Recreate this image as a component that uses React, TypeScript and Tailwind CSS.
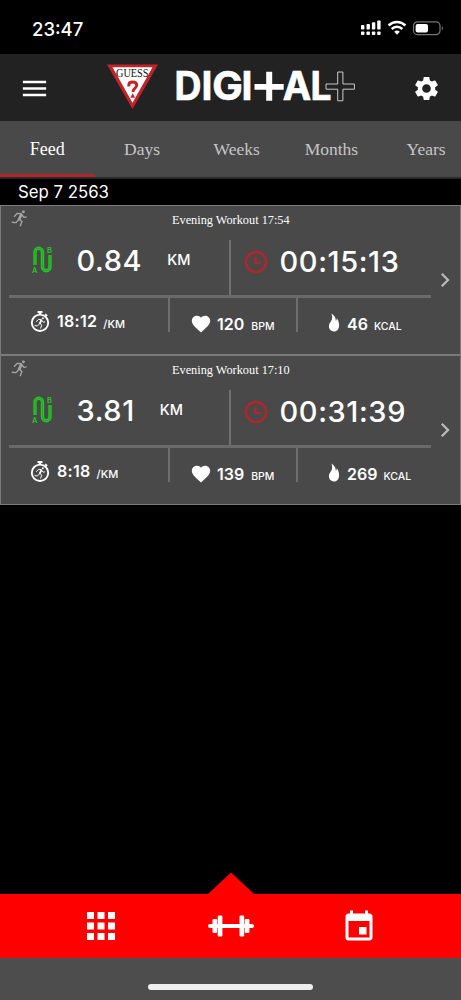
import { MdApps, MdEvent, MdFavorite, MdMenu, MdSettings } from 'react-icons/md';

interface Workout {
  id: number;
  title: string;
  distance: string;
  duration: string;
  pace: string;
  bpm: string;
  kcal: string;
}

const tabs = ['Feed', 'Days', 'Weeks', 'Months', 'Years'];

const workouts: Workout[] = [
  { id: 1, title: 'Evening Workout 17:54', distance: '0.84', duration: '00:15:13', pace: '18:12', bpm: '120', kcal: '46' },
  { id: 2, title: 'Evening Workout 17:10', distance: '3.81', duration: '00:31:39', pace: '8:18', bpm: '139', kcal: '269' },
];

function StatusBar() {
  return (
    <div className="flex h-[54px] shrink-0 items-start justify-between pl-8 pr-[17px]">
      <span className="mt-[18px] text-[18.500px] font-medium leading-[22px]">23:47</span>
      <svg className="mt-5" width="84" height="16" viewBox="0 0 84 16" fill="none">
        <g fill="#fff">
          <rect x="1" y="5" width="3.4" height="4.5" rx="0.8" />
          <rect x="6.5" y="4" width="3.4" height="5.5" rx="0.8" />
          <rect x="11.9" y="2.3" width="3.4" height="7.2" rx="0.8" />
          <rect x="17.2" y="0.5" width="3.4" height="9" rx="0.8" />
          <rect x="1" y="11.5" width="3.4" height="3.5" rx="0.8" />
          <rect x="6.5" y="11.5" width="3.4" height="3.5" rx="0.8" />
          <rect x="11.9" y="11.5" width="3.4" height="3.5" rx="0.8" />
          <rect x="17.2" y="11.5" width="3.4" height="3.5" rx="0.8" />
          <path d="M34.2 11.8a4 4 0 0 1 5.6 0L37 14.8z" />
        </g>
        <path d="M28.6 5.5a12 12 0 0 1 16.8 0M31.7 9a7.6 7.6 0 0 1 10.6 0" stroke="#fff" strokeWidth="2.5" />
        <rect x="53.5" y="1.8" width="26.5" height="12.9" rx="4" stroke="#747474" strokeWidth="1.2" />
        <rect x="55.6" y="4" width="12.4" height="8.6" rx="2" fill="#fff" />
        <path d="M81.8 6v4.5c1.6-.8 1.6-3.7 0-4.500z" fill="#747474" />
      </svg>
    </div>
  );
}

function GuessLogo() {
  return (
    <svg width="52" height="46" viewBox="0 0 52 46">
      <path d="M0 0.500H51L25.500 45z" fill="#c3222b" />
      <path d="M5.500 3.200H45.500L25.500 38.800z" fill="#fff" />
      <text x="9" y="12.800" textLength="32.500" lengthAdjust="spacingAndGlyphs" fontSize="12.500" fill="#111" className="font-['Liberation_Serif',serif]">
        GUESS
      </text>
      <path d="M21.800 22.500v-1.500c0-2.200 1.600-3 3.900-3 2.500 0 4 1.100 4 3.200 0 3.300-3.700 2.700-3.700 6.800" fill="none" stroke="#c3222b" strokeWidth="2.900" />
      <path d="M25.700 29.300l2.400 4.500h-4.800z" fill="#c3222b" />
    </svg>
  );
}

function DigitalLogo() {
  return (
    <svg width="182" height="52" viewBox="0 -10 182 52">
      <g fill="#fff" stroke="#fff" strokeWidth="0.700" fontSize="39" fontWeight="700" className="font-[Inter,sans-serif]">
        <text x="-0.500" y="30.300" textLength="27" lengthAdjust="spacingAndGlyphs">D</text>
        <text x="26.500" y="30.300">I</text>
        <text x="37.200" y="30.300" textLength="30.500" lengthAdjust="spacingAndGlyphs">G</text>
        <text x="66.500" y="30.300">I</text>
        <text x="107.800" y="30.300" textLength="28.500" lengthAdjust="spacingAndGlyphs">A</text>
        <text x="135.500" y="30.300" textLength="21" lengthAdjust="spacingAndGlyphs">L</text>
      </g>
      <path d="M91.200 1.700h6v12.200h11.500v5.800H97.200v11h-6v-11H79.500v-5.800h11.700z" fill="#fff" />
      <path d="M162.700 2h5.200v12h11.500v5.200h-11.500v11.600h-5.200V19.200h-11.700V14h11.700z" fill="none" stroke="#ddd" strokeWidth="0.900" />
    </svg>
  );
}

function Header() {
  return (
    <header className="flex h-[67px] shrink-0 items-center bg-[#222222] pb-[3px]">
      <MdMenu className="ml-[19px] mt-1 h-[31px] w-[31px]" />
      <div className="ml-[57px] mt-[2px]">
        <GuessLogo />
      </div>
      <div className="ml-4">
        <DigitalLogo />
      </div>
      <MdSettings className="ml-[55px] mt-[5px] h-[29px] w-[29px]" />
    </header>
  );
}

function Tabs() {
  return (
    <nav className="flex h-[58px] shrink-0 overflow-hidden border-b-2 border-[#292929] bg-[#494949] font-['Liberation_Serif',serif]">
      {tabs.map((tab, i) => (
        <div
          key={tab}
          className={
            i === 0
              ? 'flex h-[56px] w-[94.700px] shrink-0 items-center justify-center border-b-[3px] border-[#b0262b] pt-[4px] text-[18px] text-white'
              : 'flex h-[57px] w-[94.700px] shrink-0 items-center justify-center text-[17.500px] text-[#c6c6c6]'
          }
        >
          {tab}
        </div>
      ))}
    </nav>
  );
}

function Runner() {
  return (
    <>
      <circle cx="35.500" cy="5.500" r="4.300" fill="currentColor" />
      <path d="M30 12L22 29" stroke="currentColor" strokeWidth="8" fill="none" />
      <path
        d="M31 11L17 10L8 20M31 14L37 21.500L45 20M23 26L31 34L26 48M22 28L14 37L1 36"
        stroke="currentColor"
        strokeWidth="4"
        strokeLinejoin="round"
        fill="none"
      />
    </>
  );
}

function RouteIcon() {
  return (
    <svg className="ml-[23px] mt-[6px] shrink-0" width="22" height="28" viewBox="0 0 22 28" fill="none">
      <path d="M3 19V6a3.700 3.700 0 0 1 7.500 0V21a3.700 3.700 0 0 0 7.500 0V9" stroke="#27c427" strokeWidth="3.400" />
      <path d="M3 19V6a3.700 3.700 0 0 1 7.500 0V21a3.700 3.700 0 0 0 7.500 0V9" stroke="#23981f" strokeWidth="0.600" />
      <g fill="#27c427" fontSize="7.500" fontWeight="600" className="font-[Inter,sans-serif]">
        <text x="0" y="27">A</text>
        <text x="15" y="6.700">B</text>
      </g>
    </svg>
  );
}

function ClockIcon() {
  return (
    <svg className="ml-[13px] mt-[10px] shrink-0" width="24" height="24" viewBox="0 0 24 24" fill="none" stroke="#b3252b">
      <circle cx="12" cy="12" r="10" strokeWidth="2.400" />
      <path d="M11.500 6.500v6.300h5.600" strokeWidth="2.300" />
    </svg>
  );
}

function PaceIcon() {
  return (
    <svg className="ml-[21px] mt-[12px] shrink-0" width="20" height="23" viewBox="0 0 20 23">
      <path d="M7.500 1h5v2h-1.300v1.500H8.800V3H7.500zM15.700 3.500l2 1.700-1.200 1.500-2-1.800z" fill="#fff" />
      <circle cx="10" cy="12.800" r="8.200" fill="none" stroke="#fff" strokeWidth="1.900" />
      <g transform="translate(4.300 7) scale(0.240)">
        <Runner />
      </g>
    </svg>
  );
}

function FlameIcon() {
  return (
    <svg className="ml-[30px] mt-[15px] shrink-0" width="12" height="19" viewBox="0 0 12 19" fill="#fff">
      <path d="M3.300.5c3.100 1.600 4.400 4.200 4.600 7.400.6-.8.900-1.700.8-2.700 1.700 2 2.500 4.600 2.400 7.300-.1 3.400-2 6-5 6S.9 16.400.9 13.300c0-2.300 1.200-3.600 2.200-5.200C4.400 6 4.600 3.300 3.300.5z" />
    </svg>
  );
}

function WorkoutCard({ workout }: { workout: Workout }) {
  return (
    <article className="flex h-[150px] border border-[#7b7b7b] bg-[#494949]">
      <div className="w-[430px] shrink-0 pl-2">
        <div className="flex h-[34px] items-start font-['Liberation_Serif',serif] text-[12.300px] leading-none">
          <svg className="ml-[2px] mt-[4px] h-[17px] w-[17px] text-[#a5a5a5]" viewBox="0 0 48 50">
            <Runner />
          </svg>
          <span className="ml-[144px] mt-[8px] whitespace-nowrap">{workout.title}</span>
        </div>

        <div className="flex h-[55px] items-start">
          <RouteIcon />
          <span className="ml-[22.500px] mt-[6px] text-[29px] font-medium leading-none tracking-[0.600px]">{workout.distance}</span>
          <span className="ml-[25px] mt-[13px] text-[14.500px] font-medium leading-none">KM</span>
          <div className="ml-auto flex h-full w-[202px] items-start border-l-2 border-[#707070]">
            <ClockIcon />
            <span className="ml-[11.500px] mt-[7px] whitespace-nowrap text-[29px] font-medium leading-none tracking-[0.600px]">{workout.duration}</span>
          </div>
        </div>

        <div className="h-[3px] bg-[#6a6a6a]" />

        <div className="flex h-[34px] text-[16px] font-semibold leading-none">
          <div className="flex w-[159px] items-start">
            <PaceIcon />
            <span className="ml-[7px] mt-[15px] tracking-[0.300px]">{workout.pace}</span>
            <span className="ml-[6px] mt-[21px] text-[11px] font-medium leading-none">/KM</span>
          </div>
          <div className="flex w-[128px] items-start border-l-2 border-[#6e6e6e]">
            <MdFavorite className="ml-5 mt-[15px] h-[22px] w-[22px]" />
            <span className="ml-[5px] mt-[18px]">{workout.bpm}</span>
            <span className="ml-[7px] mt-[24px] text-[10.500px] font-medium leading-none">BPM</span>
          </div>
          <div className="flex flex-1 items-start border-l-2 border-[#6e6e6e]">
            <FlameIcon />
            <span className="ml-[7px] mt-[18px]">{workout.kcal}</span>
            <span className="ml-[6px] mt-[24px] text-[10.500px] font-medium leading-none">KCAL</span>
          </div>
        </div>
      </div>
      <svg className="ml-[9px] mt-[66px]" width="12" height="16" viewBox="0 0 12 16" fill="none">
        <path d="M1.800 1.700L8 8l-6.200 6.300" stroke="#b9b9b9" strokeWidth="2.300" />
      </svg>
    </article>
  );
}

function BottomNav() {
  return (
    <footer className="mt-auto shrink-0">
      <svg className="mx-auto block" width="46" height="22" viewBox="0 0 46 22">
        <path d="M23 .5L46 22H0z" fill="#ff0000" />
      </svg>
      <div className="flex h-16 items-center bg-[#ff0000]">
        <MdApps className="ml-[80px] h-[42px] w-[42px]" />
        <svg className="ml-[86px]" width="46" height="24" viewBox="0 0 46 24" fill="#fff">
          <rect x="0" y="10" width="46" height="4" rx="2" />
          <rect x="4.500" y="5" width="4.700" height="14" rx="1.200" />
          <rect x="9.700" y="1.500" width="4.700" height="21" rx="1.200" />
          <rect x="31.500" y="1.500" width="4.700" height="21" rx="1.200" />
          <rect x="36.700" y="5" width="4.700" height="14" rx="1.200" />
        </svg>
        <MdEvent className="ml-[87px] mt-[2px] h-[36px] w-[36px]" />
      </div>
      <div className="flex h-[42px] justify-center bg-[#4d4d4d] pt-[26px]">
        <div className="h-[6px] w-[165px] rounded-full bg-[#eeeeee]" />
      </div>
    </footer>
  );
}

export default function App() {
  return (
    <div className="flex h-[1000px] w-[461px] flex-col overflow-hidden bg-black font-[Inter,sans-serif] text-white">
      <StatusBar />
      <Header />
      <Tabs />
      <div className="flex h-[26px] shrink-0 items-center pl-[18px] pt-[2px] text-[16.800px]">Sep 7 2563</div>
      <main>
        {workouts.map((workout) => (
          <WorkoutCard key={workout.id} workout={workout} />
        ))}
      </main>
      <BottomNav />
    </div>
  );
}
